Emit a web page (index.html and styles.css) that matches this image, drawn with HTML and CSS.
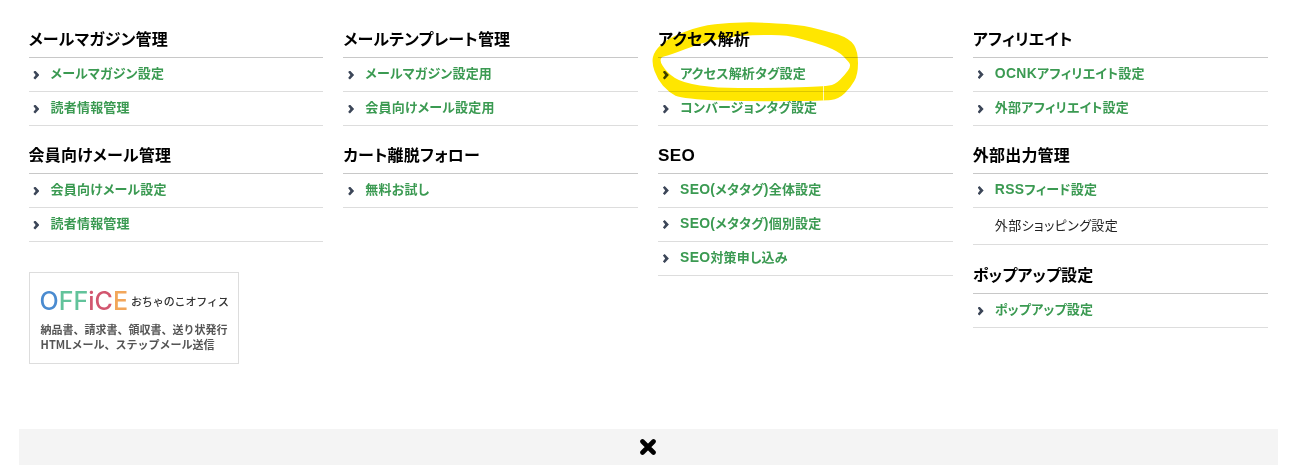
FILE: index.html
```html
<!DOCTYPE html>
<html lang="ja">
<head>
<meta charset="utf-8">
<title>メニュー</title>
<link rel="stylesheet" href="styles.css">
</head>
<body>
<div class="page">
  <main class="grid">
    <div class="col">
      <section class="sec">
        <h2 class="title">メールマガジン管理</h2>
        <ul class="list">
          <li class="row"><a class="link" href="#">メールマガジン設定</a></li>
          <li class="row"><a class="link" href="#">読者情報管理</a></li>
        </ul>
      </section>
      <section class="sec">
        <h2 class="title">会員向けメール管理</h2>
        <ul class="list">
          <li class="row"><a class="link" href="#">会員向けメール設定</a></li>
          <li class="row"><a class="link" href="#">読者情報管理</a></li>
        </ul>
      </section>
      <div class="banner">
        <div class="banner-top"><span class="office"><span class="o1">O</span><span class="o2">FF</span><span class="o3">iC</span><span class="o4">E</span></span><span class="ochanoko">おちゃのこオフィス</span></div>
        <p class="banner-text">納品書、請求書、領収書、送り状発行<br>HTMLメール、ステップメール送信</p>
      </div>
    </div>
    <div class="col">
      <section class="sec">
        <h2 class="title">メールテンプレート管理</h2>
        <ul class="list">
          <li class="row"><a class="link" href="#">メールマガジン設定用</a></li>
          <li class="row"><a class="link" href="#">会員向けメール設定用</a></li>
        </ul>
      </section>
      <section class="sec">
        <h2 class="title">カート離脱フォロー</h2>
        <ul class="list">
          <li class="row"><a class="link" href="#">無料お試し</a></li>
        </ul>
      </section>
    </div>
    <div class="col">
      <section class="sec">
        <h2 class="title">アクセス解析</h2>
        <ul class="list">
          <li class="row"><a class="link" href="#">アクセス解析タグ設定</a></li>
          <li class="row"><a class="link" href="#">コンバージョンタグ設定</a></li>
        </ul>
      </section>
      <section class="sec">
        <h2 class="title"><span class="lat">SEO</span></h2>
        <ul class="list">
          <li class="row"><a class="link" href="#"><span class="lat">SEO(</span>メタタグ<span class="lat">)</span>全体設定</a></li>
          <li class="row"><a class="link" href="#"><span class="lat">SEO(</span>メタタグ<span class="lat">)</span>個別設定</a></li>
          <li class="row"><a class="link" href="#"><span class="lat">SEO</span>対策申し込み</a></li>
        </ul>
      </section>
    </div>
    <div class="col">
      <section class="sec">
        <h2 class="title">アフィリエイト</h2>
        <ul class="list">
          <li class="row"><a class="link" href="#"><span class="lat">OCNK</span>アフィリエイト設定</a></li>
          <li class="row"><a class="link" href="#">外部アフィリエイト設定</a></li>
        </ul>
      </section>
      <section class="sec sec-tall">
        <h2 class="title">外部出力管理</h2>
        <ul class="list">
          <li class="row"><a class="link" href="#"><span class="lat">RSS</span>フィード設定</a></li>
          <li class="row row-plain"><span class="plain">外部ショッピング設定</span></li>
        </ul>
      </section>
      <section class="sec">
        <h2 class="title">ポップアップ設定</h2>
        <ul class="list">
          <li class="row"><a class="link" href="#">ポップアップ設定</a></li>
        </ul>
      </section>
    </div>
  </main>
  <footer class="closebar">
    <svg class="close-icon" width="18" height="16" viewBox="0 0 18 16" aria-label="閉じる"><path d="M3.5 2.5L14.5 13.500M14.500 2.500L3.500 13.500" stroke="#000" stroke-width="4.600" stroke-linecap="round" fill="none"/></svg>
  </footer>
</div>
<svg class="marker" width="210" height="85" viewBox="650 18 210 85" aria-hidden="true">
  <path fill="#ffe600" fill-rule="evenodd" d="M742.5 22.500Q755 22 776.5 23.400Q798 24.200 811.500 27.500Q825 30.800 838 34.500Q850 38.700 854 45Q858 51.300 858 63Q858 74.700 854.300 81Q851 87 845 93Q839 99 831 99.900Q823 100.700 791.500 101Q760 101.500 721.500 100.500Q683 99 675.500 95.700Q669 92.300 663 85.700Q657.300 79 654.500 71Q651.700 63 652.900 57.200Q654 51.300 661.500 44.200Q669 37.500 685 31.700Q700 25.800 715 24.200Q730 22.500 742.500 22.500ZM742.500 35.900Q755 35 771.500 35Q788 35 799.500 38.400Q813 41.700 826 46.500Q838 51 843 56Q848 61 849.600 63.500Q851 66.300 848 70.500Q845 74.700 840 79.700Q835 84.700 829 85.500Q823 86.300 812.500 86.800Q802 87.300 781 87.700Q760 88 738.500 88Q717 88 700 85.500Q683 83 675 78Q667 73 662.500 65.500Q658 58 664 56.500Q670 55 685 49.200Q700 43.300 715 40Q730 36.700 742.500 35.900Z"/>
  <path d="M823.500 86V101" stroke="#fff8c0" stroke-width="1" fill="none"/>
</svg>
</body>
</html>
```
FILE: styles.css
```css
* { box-sizing: border-box; }
html, body { margin: 0; padding: 0; }
body {
  position: relative;
  width: 1295px;
  height: 465px;
  overflow: hidden;
  background: #fff;
  font-family: "Liberation Sans", "Noto Sans CJK JP", sans-serif;
  font-feature-settings: "palt";
  color: #000;
}
.page { display: flex; flex-direction: column; height: 465px; padding: 22px 17px 0 19px; }
.grid { display: grid; grid-template-columns: repeat(4, 294.75px); column-gap: 20px; padding-left: 9.6px; height: 407px; flex: none; align-content: start; }
.col { display: flex; flex-direction: column; }
.sec { margin-bottom: 12px; }
.sec-tall { margin-bottom: 13px; }
.title { margin: 0; height: 36px; line-height: 36px; font-size: 16px; font-weight: 700; border-bottom: 1px solid #c8c8c8; letter-spacing: 0.012em; white-space: nowrap; }
.lat { font-size: 1.07em; letter-spacing: 0.3px; }
.list { list-style: none; margin: 0; padding: 0; }
.row { height: 34px; border-bottom: 1px solid #ddd; display: flex; align-items: center; padding-bottom: 2px; }
.row-plain { height: 37px; padding-bottom: 4px; }
.link { position: relative; display: block; padding-left: 22px; font-size: 13px; font-weight: 700; color: #3b9a52; text-decoration: none; line-height: 20px; letter-spacing: 0.015em; }
.link::before { content: ""; position: absolute; left: 4.8px; top: 7px; width: 6px; height: 9px; background: #3c4658; clip-path: polygon(0 18%, 30% 0, 100% 50%, 30% 100%, 0 82%, 38% 50%); }
.plain { padding-left: 22px; font-size: 13px; color: #222; letter-spacing: 0.03em; }
.banner { width: 210px; height: 92px; margin-top: 18px; border: 1px solid #ddd; padding: 13px 10px 0 10px; font-family: "Noto Sans CJK JP", sans-serif; font-feature-settings: normal; }
.banner-top { display: flex; align-items: center; gap: 3px; height: 30px; }
.office { font-family: "Inter", sans-serif; font-size: 25px; line-height: 30px; font-weight: 500; }
.o1 { color: #4a8bd0; }
.o2 { color: #62c39b; }
.o3 { color: #d2566f; }
.o4 { color: #f2a65a; }
.ochanoko { font-size: 11px; font-weight: 500; color: #333; white-space: nowrap; letter-spacing: -0.1px; }
.banner-text { margin: 6px 0 0 1px; font-size: 11px; line-height: 15px; font-weight: 700; color: #555; white-space: nowrap; }
.closebar { height: 36px; background: #f4f4f4; width: 1259px; display: flex; justify-content: center; align-items: center; padding-right: 2px; }
.marker { position: absolute; left: 650px; top: 18px; mix-blend-mode: multiply; }
```
